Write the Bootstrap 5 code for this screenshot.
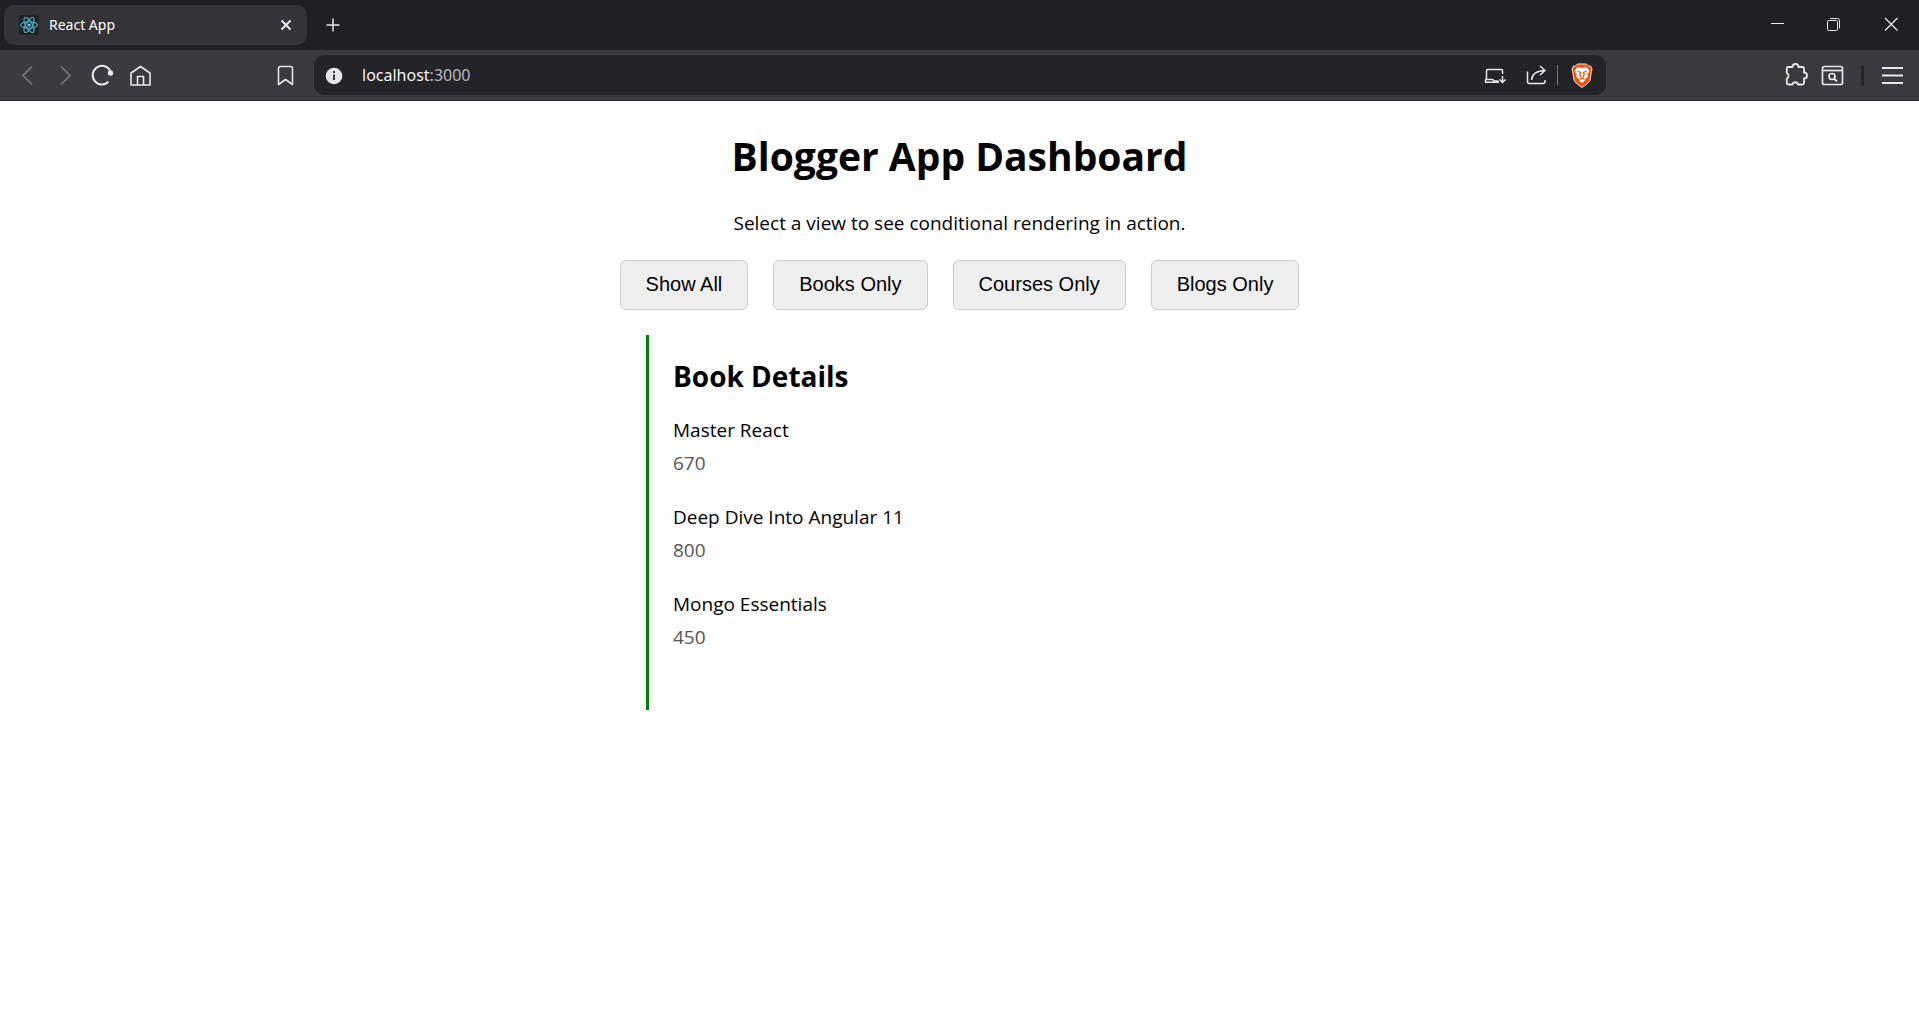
<!DOCTYPE html>
<html lang="en">
<head>
<meta charset="utf-8">
<meta name="viewport" content="width=device-width, initial-scale=1">
<title>React App</title>
<link href="https://cdn.jsdelivr.net/npm/bootstrap@5.3.0/dist/css/bootstrap.min.css" rel="stylesheet">
<style>
body { font-family: "Open Sans", "Noto Sans", sans-serif; font-size: 19px; color: #000; background: #fff; }
svg { display: block; flex: none; fill: none; stroke: currentColor; }
.chrome-btn { border: 0; padding: 0; background: transparent; color: #e8e7ea; display: flex; align-items: center; justify-content: center; flex: none; }
.tabstrip { background: #201f24; height: 50px; }
.browser-tab { background: #343337; border-radius: 10px; width: 303px; height: 40px; color: #fff; font-family: "Noto Sans", sans-serif; font-size: 14px; line-height: 20px; padding: 0 9px 0 15px; gap: 10px; }
.toolbar { background: #3b3a3e; height: 51px; border-bottom: 1px solid #2b2a2e; }
.nav-group { width: 314px; }
.tool-group { width: 313px; }
.address { background: #242327; border-radius: 10px; height: 40px; }
.url-text { font-family: "Noto Sans", sans-serif; font-size: 16px; line-height: 24px; color: #f4f4f6; text-decoration: none; }
.url-text span { color: #b9b8bd; }
.dim { color: #7c7b80; }
.page-title { font-size: 39px; font-weight: 700; line-height: 54px; margin: 28px 0 26px; }
.lead-in { line-height: 28px; margin: 0 0 23px; }
.view-btn { font-family: "Liberation Sans", Arial, sans-serif; font-size: 20px; line-height: 24px; color: #000; background: #efefef; border: 1px solid #ccc; border-radius: 6px; padding: 11px 25px 13px; }
.view-row { gap: 25px; margin-bottom: 25px; }
.details { width: 100%; max-width: 627px; border-left: 3px solid green; padding: 20px 24px 33px; }
.details h2 { font-size: 28px; font-weight: 700; line-height: 42px; margin: 0 0 19px; }
.details dt { font-weight: 400; line-height: 28px; margin-bottom: 5px; }
.details dd { color: #555; line-height: 28px; margin-bottom: 26px; }
</style>
</head>
<body>
<header>
  <div class="tabstrip d-flex align-items-center ps-1">
    <div class="browser-tab d-flex align-items-center">
      <svg width="20" height="20" viewBox="0 0 20 20"><rect width="20" height="20" rx="2" fill="#222" stroke="none"/><g stroke="#4fb8d3" stroke-width="1.100"><ellipse cx="10" cy="10" rx="8.500" ry="3.300"/><ellipse cx="10" cy="10" rx="8.500" ry="3.300" transform="rotate(60 10 10)"/><ellipse cx="10" cy="10" rx="8.500" ry="3.300" transform="rotate(120 10 10)"/></g><circle cx="10" cy="10" r="1.600" fill="#61dafb" stroke="none"/></svg>
      <span class="me-auto">React App</span>
      <button class="chrome-btn p-1" aria-label="Close tab"><svg width="16" height="16" viewBox="0 0 16 16" stroke-width="2"><path d="M3.500 3.500l9 9M12.500 3.500l-9 9"/></svg></button>
    </div>
    <button class="chrome-btn ms-3" aria-label="New tab"><svg width="20" height="20" viewBox="0 0 20 20" stroke-width="1.500"><path d="M10 3.500v13M3.500 10h13"/></svg></button>
    <div class="d-flex ms-auto">
      <button class="chrome-btn" aria-label="Minimize"><svg width="57" height="50" viewBox="-1 0 57 50"><path d="M22 23.500h13"/></svg></button>
      <button class="chrome-btn" aria-label="Restore"><svg width="57" height="50" viewBox="-1 0 57 50"><rect x="21.500" y="20.500" width="10" height="10" rx="1"/><path d="M24 18.500h7.500a2 2 0 0 1 2 2v8"/></svg></button>
      <button class="chrome-btn" aria-label="Close"><svg width="57" height="50" viewBox="-1 0 57 50"><path d="M22 18l12.500 12.500M34.500 18L22 30.500" stroke-width="1.300"/></svg></button>
    </div>
  </div>
  <nav class="toolbar d-flex align-items-center">
    <div class="nav-group d-flex align-items-center flex-shrink-0">
      <button class="chrome-btn dim" aria-label="Back"><svg width="46" height="50" viewBox="0 0 46 50" stroke-width="1.600"><path d="M32 16.500L23 25.500l9 9"/></svg></button>
      <button class="chrome-btn dim" aria-label="Forward"><svg width="38" height="50" viewBox="0 0 38 50" stroke-width="1.600"><path d="M15 16.500l9 9-9 9"/></svg></button>
      <button class="chrome-btn" aria-label="Reload"><svg width="38" height="50" viewBox="0 0 38 50" stroke-width="2"><path d="M24.500 31.800A9.300 9.300 0 1 1 26 20.500"/><circle cx="26.500" cy="23" r="2.700" fill="currentColor" stroke="none"/></svg></button>
      <button class="chrome-btn" aria-label="Home"><svg width="38" height="50" viewBox="0 0 38 50" stroke-width="1.600" stroke-linejoin="round"><path d="M9 35V23l9.500-6.500L28 23v12zM15.500 35v-8.500h6V35"/></svg></button>
      <button class="chrome-btn ms-auto" aria-label="Bookmark"><svg width="58" height="50" viewBox="0 0 58 50" stroke-width="1.600"><path d="M22.500 34.500v-16a2 2 0 0 1 2-2h10a2 2 0 0 1 2 2v16l-7-5z" stroke-linejoin="round"/></svg></button>
    </div>
    <div class="address d-flex align-items-center flex-grow-1">
      <button class="chrome-btn" aria-label="Site information"><svg width="48" height="40" viewBox="0 0 48 40"><circle cx="20" cy="21" r="8.300" fill="#e6e5ea" stroke="none"/><path d="M20 19.500v5.500M20 16v2" stroke="#3b3a3e" stroke-width="2"/></svg></button>
      <a class="url-text me-auto" href="#">localhost<span>:3000</span></a>
      <button class="chrome-btn" aria-label="Install app"><svg width="42" height="40" viewBox="0 0 42 40" stroke="#c5c4c9" stroke-width="1.500"><path d="M13.500 24V15.500a1 1 0 0 1 1-1H28.500a1 1 0 0 1 1 1V19M12 24.500h7.500l1.500 1.500h4.500M12.500 24.500v2.800h13.500M29.500 21v6.500M26.500 24.500l3 3 3-3"/></svg></button>
      <button class="chrome-btn" aria-label="Share"><svg width="42" height="40" viewBox="0 0 42 40" stroke="#c5c4c9" stroke-width="1.500"><path d="M12.500 16.500v10a2 2 0 0 0 2 2h13.500a2 2 0 0 0 2-2V25M16.500 25c.5-6 4-9 13-9.500M25 11l5 4.500-5 4.500"/></svg></button>
      <button class="chrome-btn" aria-label="Brave Shields"><svg width="49" height="40" viewBox="0 0 49 40" stroke="none"><path d="M0 10v20" stroke="#77767b" stroke-width="2"/><path d="M20.500 9h9l2 2h2l1.500 3-.5 2-1.500 9q-.5 2.500-8 7.500-7.500-5-8-7.500L15.500 16l-.5-2 1.500-3h2z" fill="#fb4f0b"/><path d="M20.500 12.500l4.500.8 4.500-.8 2.500 3.300-2 3.700.3 2.300-2.300 1.700-.5 2L25 27.500l-2.500-2-.5-2-2.300-1.700.3-2.300-2-3.700z" fill="#fff"/><path d="M20.500 16l3 1.500-.7 2 1.200 2.700M29.500 16l-3 1.500.7 2-1.200 2.700M22.500 24.300l2.500-1.300 2.500 1.300" stroke="#fb4f0b" stroke-width="1.300"/></svg></button>
    </div>
    <div class="tool-group d-flex align-items-center justify-content-end flex-shrink-0">
      <button class="chrome-btn" aria-label="Extensions"><svg width="36" height="50" viewBox="0 0 36 50" stroke-width="1.800" stroke-linejoin="round"><path d="M9.800 18.500a1.500 1.500 0 0 1 1.500-1.500h4.200a3 3 0 0 1 6 0h4a1.500 1.500 0 0 1 1.500 1.500v4a3 3 0 0 1 0 6v4.500a1.500 1.500 0 0 1-1.500 1.500H21a2.800 2.800 0 0 0-5.500 0h-4.200a1.500 1.500 0 0 1-1.500-1.500v-4.500a3 3 0 0 0 0-5.500z"/></svg></button>
      <button class="chrome-btn" aria-label="Search tabs"><svg width="38" height="50" viewBox="0 0 38 50" stroke-width="1.700"><rect x="9.500" y="16.500" width="20" height="18" rx="2"/><path d="M9.500 20.500h20"/><circle cx="19" cy="26.500" r="3"/><path d="M21 28.500l3 3" stroke-width="2"/></svg></button>
      <button class="chrome-btn" aria-label="Menu"><svg width="68" height="50" viewBox="0 0 68 50"><path d="M11.500 15.500v20" stroke="#242327" stroke-width="3"/><path d="M31 18h21M31 25.500h21M31 33h21" stroke-width="1.800"/></svg></button>
    </div>
  </nav>
</header>
<main class="container-fluid d-flex flex-column align-items-center">
  <h1 class="page-title">Blogger App Dashboard</h1>
  <p class="lead-in">Select a view to see conditional rendering in action.</p>
  <div class="view-row d-flex flex-wrap justify-content-center">
    <button class="view-btn">Show All</button>
    <button class="view-btn">Books Only</button>
    <button class="view-btn">Courses Only</button>
    <button class="view-btn">Blogs Only</button>
  </div>
  <section class="details">
    <h2>Book Details</h2>
    <dl class="mb-0">
      <dt>Master React</dt><dd>670</dd>
      <dt>Deep Dive Into Angular 11</dt><dd>800</dd>
      <dt>Mongo Essentials</dt><dd>450</dd>
    </dl>
  </section>
</main>
<script src="https://cdn.jsdelivr.net/npm/bootstrap@5.3.0/dist/js/bootstrap.bundle.min.js"></script>
</body>
</html>
